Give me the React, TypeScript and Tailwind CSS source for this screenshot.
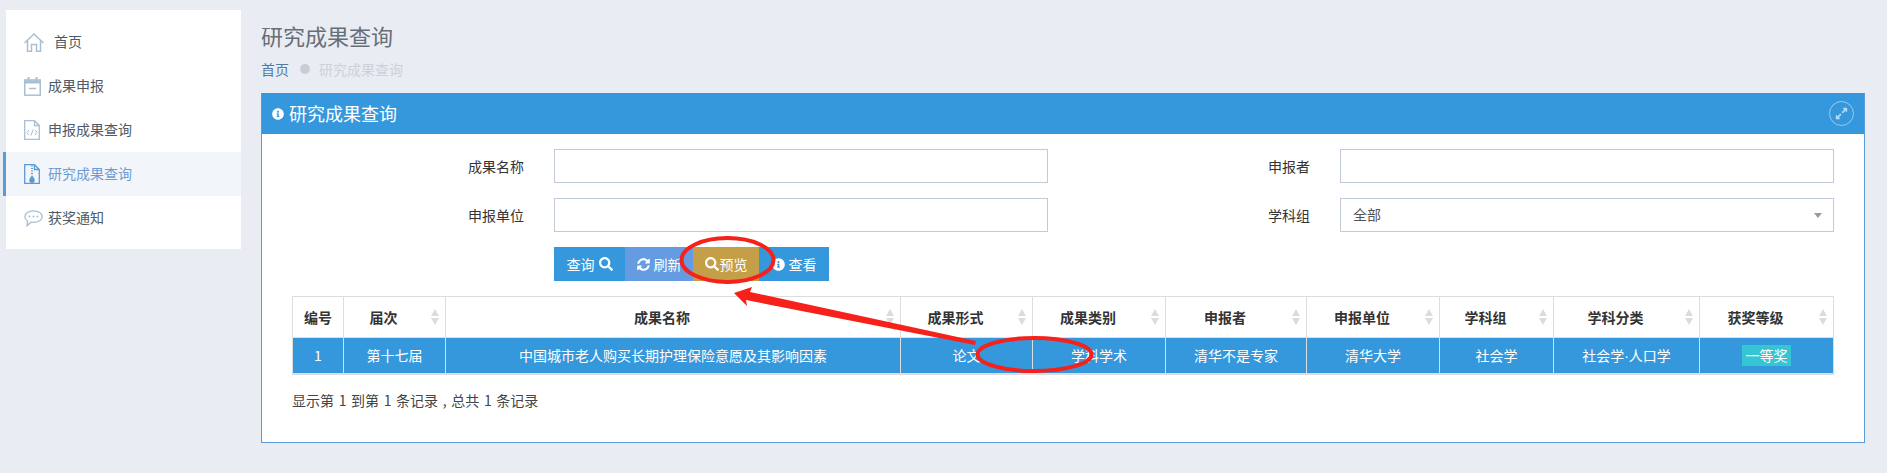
import { FaExpandAlt, FaInfoCircle, FaSearch, FaSyncAlt } from "react-icons/fa";

function HomeIcon() {
  return (
    <svg width="20" height="19" viewBox="0 0 20 19" fill="none" stroke="currentColor" strokeWidth="1.5">
      <path d="M0.6 10 L10 1 L19.4 10 M3.5 8 V18.2 H7.5 V11.5 H12.5 V18.2 H16.5 V8" />
    </svg>
  );
}

function CalendarIcon() {
  return (
    <svg width="17" height="19" viewBox="0 0 17 19" fill="none" stroke="currentColor" strokeWidth="1.5">
      <rect x="0.75" y="3" width="15.5" height="15.2" />
      <path d="M0.75 5 H16.25" strokeWidth="3" />
      <path d="M4.5 0 V4 M12.5 0 V4" strokeWidth="2" />
      <path d="M5 11.5 H12" />
    </svg>
  );
}

function FileCodeIcon() {
  return (
    <svg width="16" height="20" viewBox="0 0 16 20" fill="none" stroke="currentColor" strokeWidth="1.3">
      <path d="M0.7 0.7 H10.5 L15.3 5.5 V19.3 H0.7 Z M10.5 0.7 V5.5 H15.3" />
      <path d="M5 10 L3 12.5 L5 15 M11 10 L13 12.5 L11 15 M9 9.5 L7 15.5" strokeWidth="1" />
    </svg>
  );
}

function FileZipIcon() {
  return (
    <svg width="16" height="20" viewBox="0 0 16 20" fill="none" stroke="currentColor" strokeWidth="1.3">
      <path d="M0.7 0.7 H10.5 L15.3 5.5 V19.3 H0.7 Z M10.5 0.7 V5.5 H15.3" />
      <path d="M7 2 H9 M7 4.5 H9 M7 7 H9 M7 9.5 H9" strokeWidth="1" />
      <path d="M8 11 L10.5 15 A2.8 2.8 0 1 1 5.5 15 Z" fill="currentColor" stroke="none" />
    </svg>
  );
}

function CommentIcon() {
  return (
    <svg width="19" height="17" viewBox="0 0 19 17" fill="none" stroke="currentColor" strokeWidth="1.3">
      <path d="M9.5 0.8 C14.5 0.8 18.2 3.3 18.2 6.6 C18.2 9.9 14.5 12.4 9.5 12.4 C8.6 12.4 7.8 12.3 7 12.2 L3 15.8 L3.6 11 C1.8 9.9 0.8 8.4 0.8 6.6 C0.8 3.3 4.5 0.8 9.5 0.8 Z" />
      <circle cx="5.5" cy="6.6" r="1" fill="currentColor" stroke="none" />
      <circle cx="9.5" cy="6.6" r="1" fill="currentColor" stroke="none" />
      <circle cx="13.5" cy="6.6" r="1" fill="currentColor" stroke="none" />
    </svg>
  );
}

const menu = [
  { label: "首页", icon: HomeIcon, gap: "gap-[10px]" },
  { label: "成果申报", icon: CalendarIcon, gap: "gap-[7px]" },
  { label: "申报成果查询", icon: FileCodeIcon, gap: "gap-[8px]" },
  { label: "研究成果查询", icon: FileZipIcon, gap: "gap-[8px]", active: true },
  { label: "获奖通知", icon: CommentIcon, gap: "gap-[5px]" },
];

const columns = [
  { title: "编号", width: "w-[51px]", cell: "1", plain: true },
  { title: "届次", width: "w-[102px]", cell: "第十七届" },
  { title: "成果名称", width: "w-[455px]", cell: "中国城市老人购买长期护理保险意愿及其影响因素" },
  { title: "成果形式", width: "w-[132px]", cell: "论文" },
  { title: "成果类别", width: "w-[133px]", cell: "学科学术" },
  { title: "申报者", width: "w-[141px]", cell: "清华不是专家" },
  { title: "申报单位", width: "w-[133px]", cell: "清华大学" },
  { title: "学科组", width: "w-[114px]", cell: "社会学" },
  { title: "学科分类", width: "w-[146px]", cell: "社会学·人口学", dotted: true },
  { title: "获奖等级", width: "w-[134px]", cell: "一等奖", badge: true },
];

function SortIcon() {
  return (
    <svg width="8" height="16" viewBox="0 0 8 16" className="absolute right-[6px] top-[12px]">
      <path d="M4 0 L8 7 L0 7 Z M0 9 L8 9 L4 16 Z" fill="#dcdcdc" />
    </svg>
  );
}

function Sidebar() {
  return (
    <div className="ml-[6px] mt-[10px] h-[239px] w-[235px] bg-white py-[10px]">
      {menu.map((item) => {
        const Icon = item.icon;
        return (
          <div
            key={item.label}
            className={`-ml-[3px] flex h-[44px] items-center border-l-[3px] pl-[18px] text-sm ${item.gap} ${
              item.active ? "border-[#5b9bd5] bg-[#f2f5f9] text-[#6c9cd6]" : "border-transparent text-[#4e5a66]"
            }`}
          >
            <span className={item.active ? "text-[#5b9bd5]" : "text-[#a9bfd3]"}>
              <Icon />
            </span>
            <span className="-mt-[2px]">{item.label}</span>
          </div>
        );
      })}
    </div>
  );
}

function Field({ label }: { label: string }) {
  return (
    <>
      <label className="pr-[30px] pt-[5px] text-right text-sm leading-[24px] text-[#333]">{label}</label>
      <input className="h-[34px] border border-[#c2cad8] bg-white" />
    </>
  );
}

function SearchForm() {
  return (
    <div className="grid grid-cols-[262px_494px_292px_494px] gap-y-[15px]">
      <Field label="成果名称" />
      <Field label="申报者" />
      <Field label="申报单位" />
      <label className="pr-[30px] pt-[5px] text-right text-sm leading-[24px] text-[#333]">学科组</label>
      <div className="flex h-[34px] items-center justify-between border border-[#c2cad8] bg-white pl-[12px] pr-[11px] text-sm text-[#555]">
        <span className="-mt-[2px]">全部</span>
        <span className="h-0 w-0 border-x-[4px] border-t-[5px] border-x-transparent border-t-[#999]" />
      </div>
    </div>
  );
}

function Buttons() {
  return (
    <div className="ml-[262px] mt-[15px] flex h-[34px] text-sm text-white">
      <button className="flex w-[71px] items-center justify-center gap-[4px] bg-[#3598dc]">
        查询 <FaSearch size={14} />
      </button>
      <button className="flex w-[68px] items-center justify-center gap-[4px] bg-[#659be0]">
        <FaSyncAlt size={13} /> 刷新
      </button>
      <button className="flex w-[66px] items-center justify-center gap-[1px] bg-[#c49f47]">
        <FaSearch size={14} /> 预览
      </button>
      <button className="flex w-[70px] items-center justify-center gap-[4px] bg-[#3598dc]">
        <FaInfoCircle size={13} /> 查看
      </button>
    </div>
  );
}

function DottedText() {
  return (
    <>
      社会学<span className="font-['Liberation_Sans',sans-serif]">·</span>人口学
    </>
  );
}

function ResultTable() {
  return (
    <table className="mt-[15px] w-[1541px] table-fixed border-collapse border-b-2 border-b-[#ddd] text-sm">
      <colgroup>
        {columns.map((col) => (
          <col key={col.title} className={col.width} />
        ))}
      </colgroup>
      <thead>
        <tr className="h-[41px]">
          {columns.map((col) => (
            <th
              key={col.title}
              className={`relative border border-[#ddd] font-bold text-[#333] ${col.plain ? "" : "pr-[22px]"}`}
            >
              {col.title}
              {!col.plain && <SortIcon />}
            </th>
          ))}
        </tr>
      </thead>
      <tbody>
        <tr className="h-[36px] bg-[#3598dc] text-white">
          {columns.map((col) => (
            <td key={col.title} className="border-x border-x-[#ddd] text-center">
              {col.badge ? (
                <span className="inline-block h-[21px] w-[49px] bg-[#36c6d3] leading-[21px]">{col.cell}</span>
              ) : col.dotted ? (
                <DottedText />
              ) : (
                col.cell
              )}
            </td>
          ))}
        </tr>
      </tbody>
    </table>
  );
}

function Annotations() {
  return (
    <svg className="pointer-events-none absolute left-0 top-0" width="1887" height="473" viewBox="0 0 1887 473">
      <ellipse cx="727.5" cy="260" rx="46" ry="22" fill="none" stroke="#f5211a" strokeWidth="4" />
      <ellipse cx="1034.5" cy="354.5" rx="57" ry="16.5" fill="none" stroke="#f5211a" strokeWidth="4" />
      <polygon points="734,293 752,287 750,292 976,341 975,345 746,300 747,306" fill="#f5211a" />
    </svg>
  );
}

export default function App() {
  return (
    <div className="relative flex h-[473px] w-[1887px] overflow-hidden bg-[#e9ecf3] font-['Noto_Sans_CJK_SC',sans-serif]">
      <Sidebar />
      <div className="ml-[20px] w-[1604px] pt-[20px]">
        <h1 className="text-[22px] leading-[30px] text-[#666e78]">研究成果查询</h1>
        <div className="mt-[9px] flex h-[20px] items-center text-sm">
          <span className="text-[#4f7ca8]">首页</span>
          <span className="ml-[11px] h-[10px] w-[10px] rounded-full bg-[#c8ccd4]" />
          <span className="ml-[9px] text-[#cdd1d8]">研究成果查询</span>
        </div>
        <div className="mt-[14px] h-[350px] border border-[#5b9bd5] bg-white">
          <div className="-mt-px flex h-[41px] items-center justify-between bg-[#3598dc] pl-[10px] pr-[10px] text-white">
            <div className="flex items-center gap-[5px]">
              <FaInfoCircle size={12} />
              <span className="-mt-[2px] text-lg">研究成果查询</span>
            </div>
            <div className="flex h-[25px] w-[25px] items-center justify-center rounded-full border border-[#9dcbee]">
              <FaExpandAlt size={13} className="text-[#b5daf4]" />
            </div>
          </div>
          <div className="px-[30px] pt-[15px]">
            <SearchForm />
            <Buttons />
            <ResultTable />
            <p className="mt-[15px] text-sm leading-[20px] text-[#444] [word-spacing:1.5px]">
              显示第 1 到第 1 条记录 , 总共 1 条记录
            </p>
          </div>
        </div>
      </div>
      <Annotations />
    </div>
  );
}
